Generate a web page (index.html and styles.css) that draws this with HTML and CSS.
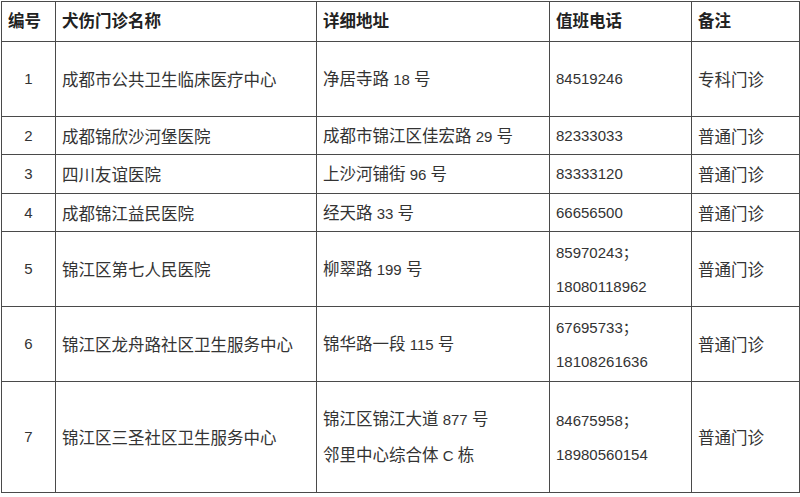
FILE: index.html
```html
<!DOCTYPE html>
<html lang="zh-CN">
<head>
<meta charset="utf-8">
<title>犬伤门诊</title>
<link rel="stylesheet" href="styles.css">
</head>
<body>
<table class="clinics">
  <colgroup>
    <col class="c-no">
    <col class="c-name">
    <col class="c-addr">
    <col class="c-tel">
    <col class="c-note">
  </colgroup>
  <thead>
    <tr class="r-head">
      <th class="no-head">编号</th>
      <th>犬伤门诊名称</th>
      <th>详细地址</th>
      <th>值班电话</th>
      <th>备注</th>
    </tr>
  </thead>
  <tbody>
    <tr class="r-tall">
      <td class="no n">1</td>
      <td>成都市公共卫生临床医疗中心</td>
      <td>净居寺路<span class="n"> 18 </span>号</td>
      <td class="n">84519246</td>
      <td>专科门诊</td>
    </tr>
    <tr class="r-short">
      <td class="no n">2</td>
      <td>成都锦欣沙河堡医院</td>
      <td>成都市锦江区佳宏路<span class="n"> 29 </span>号</td>
      <td class="n">82333033</td>
      <td>普通门诊</td>
    </tr>
    <tr class="r-short2">
      <td class="no n">3</td>
      <td>四川友谊医院</td>
      <td>上沙河铺街<span class="n"> 96 </span>号</td>
      <td class="n">83333120</td>
      <td>普通门诊</td>
    </tr>
    <tr class="r-short">
      <td class="no n">4</td>
      <td>成都锦江益民医院</td>
      <td>经天路<span class="n"> 33 </span>号</td>
      <td class="n">66656500</td>
      <td>普通门诊</td>
    </tr>
    <tr class="r-tall">
      <td class="no n">5</td>
      <td>锦江区第七人民医院</td>
      <td>柳翠路<span class="n"> 199 </span>号</td>
      <td class="n multi">85970243<span class="semi">；</span><br>18080118962</td>
      <td>普通门诊</td>
    </tr>
    <tr class="r-tall">
      <td class="no n">6</td>
      <td>锦江区龙舟路社区卫生服务中心</td>
      <td>锦华路一段<span class="n"> 115 </span>号</td>
      <td class="n multi">67695733<span class="semi">；</span><br>18108261636</td>
      <td>普通门诊</td>
    </tr>
    <tr class="r-last">
      <td class="no n">7</td>
      <td>锦江区三圣社区卫生服务中心</td>
      <td class="multi">锦江区锦江大道<span class="n"> 877 </span>号<br>邻里中心综合体<span class="n"> C </span>栋</td>
      <td class="n multi">84675958<span class="semi">；</span><br>18980560154</td>
      <td>普通门诊</td>
    </tr>
  </tbody>
</table>
</body>
</html>
```

FILE: styles.css
```css
html, body {
  margin: 0;
  padding: 0;
  background: #ffffff;
}

body {
  padding: 1px 0 0 1px;
  font-family: "Noto Sans CJK SC", "Liberation Sans", sans-serif;
  color: #333333;
}

.clinics {
  border-collapse: collapse;
  table-layout: fixed;
  width: 798px;
  font-size: 16.5px;
}

.c-no { width: 54px; }
.c-name { width: 261px; }
.c-addr { width: 233px; }
.c-tel { width: 142px; }
.c-note { width: 108px; }

.clinics th,
.clinics td {
  border: 1px solid #4a4a4a;
  padding: 0 4px 0 6px;
  text-align: left;
  vertical-align: middle;
  white-space: nowrap;
  line-height: 22px;
}

.clinics th {
  font-weight: 700;
  color: #222222;
  padding-bottom: 3px;
}

.clinics .no {
  text-align: center;
  padding: 0;
}

.r-head { height: 40px; }
.r-tall { height: 75px; }
.r-short { height: 38px; }
.r-short2 { height: 39px; }
.r-last { height: 111px; }

.n {
  font-family: "Liberation Sans", "Noto Sans CJK SC", sans-serif;
  font-size: 15px;
}

.clinics .multi {
  line-height: 34px;
}

.semi {
  font-family: "Noto Sans CJK SC", sans-serif;
  font-size: 15px;
}
```
